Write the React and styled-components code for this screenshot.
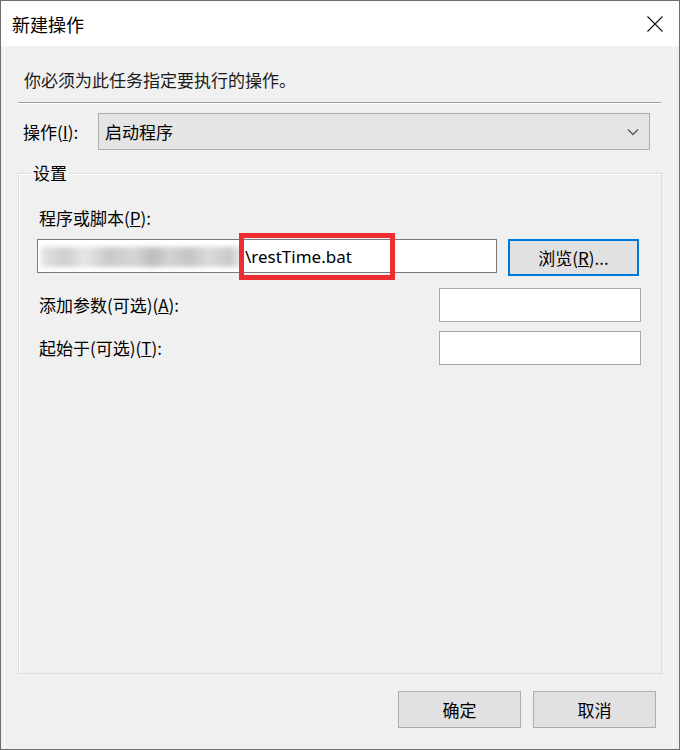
import React from "react";
import styled, { createGlobalStyle } from "styled-components";

const GlobalStyle = createGlobalStyle`
  html, body {
    margin: 0;
    padding: 0;
    background: #ffffff;
  }
  * {
    box-sizing: border-box;
  }
`;

const Window = styled.div`
  width: 680px;
  height: 750px;
  border: 1px solid #6e6e6e;
  display: flex;
  flex-direction: column;
  font-family: "Noto Sans CJK SC", "Noto Sans", sans-serif;
  color: #000;
`;

const TitleBar = styled.div`
  height: 45px;
  flex-shrink: 0;
  background: #ffffff;
  display: flex;
  align-items: center;
  justify-content: space-between;
  padding: 0 16px 0 11px;
`;

const Title = styled.div`
  font-size: 18px;
  line-height: 24px;
  color: #000;
`;

const CloseButton = styled.div`
  width: 16px;
  height: 16px;
  display: flex;
  align-items: center;
  justify-content: center;
`;

const Body = styled.div`
  flex: 1;
  display: flex;
  flex-direction: column;
  background: #f0f0f0;
  padding: 0 17px;
  box-shadow: inset 3px 0 0 #f0f0f0, inset 4px 0 0 #ffffff,
    inset -5px 0 0 #f0f0f0, inset -6px 0 0 #ffffff;
`;

const Instruction = styled.div`
  margin-top: 22px;
  padding-left: 6px;
  font-size: 17px;
  line-height: 24px;
  color: #1a1a1a;
`;

const Separator = styled.div`
  margin-top: 10px;
  margin-right: 1px;
  border-top: 1px solid #a0a0a0;
  border-bottom: 1px solid #ffffff;
`;

const ActionRow = styled.div`
  display: flex;
  align-items: center;
  margin-top: 9px;
  padding-left: 5px;
  padding-right: 12px;
`;

const Label = styled.div`
  font-size: 17px;
  line-height: 24px;
  width: ${(p) => p.$width || "auto"};
  flex-shrink: 0;
  white-space: nowrap;
`;

const Select = styled.div`
  flex: 1;
  height: 37px;
  background: #e5e5e5;
  border: 1px solid #adadad;
  display: flex;
  align-items: center;
  justify-content: space-between;
  padding: 0 10px 0 6px;
  font-size: 17px;
`;

const GroupBox = styled.fieldset`
  margin: 11px 0 0 0;
  padding: 0 18px 0 18px;
  height: 513px;
  border: 1px solid #dcdcdc;
  box-shadow: inset 1px 1px 0 #ffffff;
  min-width: 0;
`;

const GroupLegend = styled.legend`
  margin-left: -6px;
  padding: 0 2px;
  font-size: 17px;
  line-height: 24px;
`;

const FieldLabel = styled(Label)`
  padding-left: 2px;
`;

const ProgramLabel = styled(FieldLabel)`
  margin-top: 21px;
`;

const ProgramRow = styled.div`
  display: flex;
  align-items: flex-start;
  gap: 11px;
  margin-top: 9px;
  padding-right: 2px;
`;

const TextBox = styled.div`
  position: relative;
  width: ${(p) => p.$width};
  height: 34px;
  flex-shrink: 0;
  background: #ffffff;
  border: 1px solid ${(p) => (p.$dark ? "#7a7a7a" : "#a8a8a8")};
  display: flex;
  align-items: center;
  padding-left: 3px;
`;

/* mosaic over the hidden part of the path */
const Redaction = styled.div`
  width: 200px;
  height: 20px;
  flex-shrink: 0;
  margin-top: 2px;
  background: linear-gradient(
    90deg,
    #e4e4e4 0%,
    #cfcfcf 12%,
    #e6e6e6 22%,
    #c9c9c9 34%,
    #d6d6d6 46%,
    #bdbdbd 56%,
    #d3d3d3 64%,
    #c4c4c4 74%,
    #dcdcdc 84%,
    #c8c8c8 94%,
    #e8e8e8 100%
  );
  filter: blur(2.5px);
`;

const PathText = styled.span`
  margin-left: 4px;
  font-family: "Noto Sans", sans-serif;
  font-size: 17px;
  color: #000;
  white-space: nowrap;
`;

const Highlight = styled.div`
  position: absolute;
  left: 201px;
  top: -7px;
  width: 156px;
  height: 47px;
  border: 5px solid #ee2d33;
  pointer-events: none;
`;

const Button = styled.div`
  width: ${(p) => p.$width || "123px"};
  height: 37px;
  flex-shrink: 0;
  display: flex;
  align-items: center;
  justify-content: center;
  background: #e1e1e1;
  border: ${(p) => (p.$focused ? "2px solid #0078d7" : "1px solid #adadad")};
  font-size: 17px;
`;

const ParamRow = styled.div`
  display: flex;
  align-items: center;
  justify-content: space-between;
  margin-top: ${(p) => p.$top};
  padding-right: 2px;
`;

const Footer = styled.div`
  display: flex;
  justify-content: flex-end;
  gap: 12px;
  margin-top: 17px;
  padding-right: 6px;
`;

const Chevron = () => (
  <svg width="12" height="8" viewBox="0 0 12 8">
    <path d="M1 1.5 L6 6.5 L11 1.5" fill="none" stroke="#5a5a5a" strokeWidth="1.4" />
  </svg>
);

const CloseIcon = () => (
  <svg width="16" height="16" viewBox="0 0 16 16">
    <path d="M0.5 0.5 L15.5 15.5 M15.5 0.5 L0.5 15.5" stroke="#111" strokeWidth="1.1" />
  </svg>
);

export default function App() {
  return (
    <>
      <GlobalStyle />
      <Window>
        <TitleBar>
          <Title>新建操作</Title>
          <CloseButton>
            <CloseIcon />
          </CloseButton>
        </TitleBar>
        <Body>
          <Instruction>你必须为此任务指定要执行的操作。</Instruction>
          <Separator />
          <ActionRow>
            <Label $width="75px">
              操作(<u>I</u>):
            </Label>
            <Select>
              <span>启动程序</span>
              <Chevron />
            </Select>
          </ActionRow>
          <GroupBox>
            <GroupLegend>设置</GroupLegend>
            <ProgramLabel>
              程序或脚本(<u>P</u>):
            </ProgramLabel>
            <ProgramRow>
              <TextBox $width="460px" $dark>
                <Redaction />
                <PathText>\restTime.bat</PathText>
                <Highlight />
              </TextBox>
              <Button $width="131px" $focused>
                浏览(<u>R</u>)...
              </Button>
            </ProgramRow>
            <ParamRow $top="12px">
              <FieldLabel>
                添加参数(可选)(<u>A</u>):
              </FieldLabel>
              <TextBox $width="202px" />
            </ParamRow>
            <ParamRow $top="9px">
              <FieldLabel>
                起始于(可选)(<u>T</u>):
              </FieldLabel>
              <TextBox $width="202px" />
            </ParamRow>
          </GroupBox>
          <Footer>
            <Button>确定</Button>
            <Button>取消</Button>
          </Footer>
        </Body>
      </Window>
    </>
  );
}
